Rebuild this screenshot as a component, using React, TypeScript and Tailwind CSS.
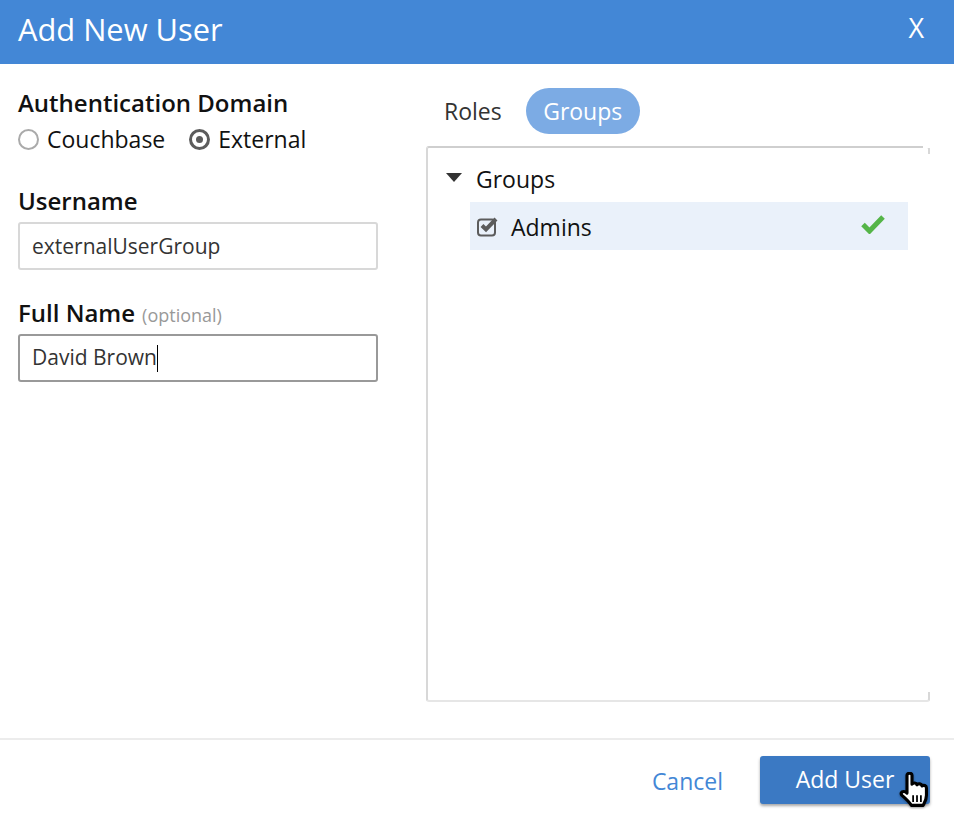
export default function App() {
  const font = { fontFamily: '"Open Sans", sans-serif' };
  return (
    <div style={font} className="w-[954px] h-[816px] bg-white flex flex-col overflow-hidden text-[#111]">
      <header className="h-16 shrink-0 bg-[#4387d6] flex items-center justify-between pl-[18px] pr-[30px] text-white">
        <h1 className="text-[30.8px] font-medium leading-none -mt-[6px]">Add New User</h1>
        <span className="text-[27px] leading-none -mt-[10px]">X</span>
      </header>
      <main className="flex-1 flex pl-[18px] pr-6 min-h-0">
        <section className="w-[360px] shrink-0 pt-[25px]">
          <div className="text-[24px] font-semibold leading-[28px]">Authentication Domain</div>
          <div className="flex items-center mt-[8px] h-7 text-[23px]">
            <span className="w-[21px] h-[21px] rounded-full border-2 border-[#aaa] mr-2 shrink-0" />
            <span>Couchbase</span>
            <span className="w-[21px] h-[21px] rounded-full border-[3px] border-[#5c5c5c] ml-6 mr-2 shrink-0 flex items-center justify-center">
              <span className="w-[7px] h-[7px] rounded-full bg-[#5c5c5c]" />
            </span>
            <span>External</span>
          </div>
          <div className="text-[24px] font-semibold leading-[28px] mt-[34px]">Username</div>
          <div className="mt-[7px] h-12 border-2 border-[#d8d8d8] rounded-[3px] flex items-center px-3 pt-[1px] text-[21px] text-[#333]">externalUserGroup</div>
          <div className="flex items-baseline gap-[7px] mt-[29px] leading-[28px]">
            <span className="text-[24px] font-semibold">Full Name</span>
            <span className="text-[18px] text-[#999]">(optional)</span>
          </div>
          <div className="mt-[5px] h-12 border-2 border-[#999] rounded-[3px] flex items-center px-3 text-[21px] text-[#333]">
            David Brown<span className="inline-block w-px h-[27px] bg-black" />
          </div>
        </section>
        <section className="flex-1 ml-12 flex flex-col pt-6 pb-[36px] min-h-0">
          <div className="flex items-center h-[46px] text-[23px]">
            <span className="px-[18px] text-[#333]">Roles</span>
            <span className="h-[46px] w-[114px] justify-center ml-[6px] rounded-[23px] bg-[#7cabe4] text-white flex items-center">Groups</span>
          </div>
          <div className="relative flex-1 mt-[12px] border-2 border-[#d8d8d8] border-t-[#cfcfcf] border-b-[#e6e6e6] rounded-[3px] pt-[15px] pl-[18px] pr-5">
            <div className="absolute -right-[2px] top-[6px] bottom-[8px] w-[2px] bg-white" />
            <div className="absolute -right-[2px] -top-[2px] w-[7px] h-[2px] bg-white" />
            <div className="flex items-center h-8 text-[23px]">
              <svg width="16" height="9" viewBox="0 0 16 9" className="mr-[14px] -mt-[4px]"><path d="M0 0h16l-8 9z" fill="#333" /></svg>
              <span>Groups</span>
            </div>
            <div className="ml-6 mt-[7px] h-12 bg-[#eaf1fa] flex items-center pl-[6px] pt-[2px] text-[23px]">
              <svg width="23" height="21" viewBox="0 0 23 21" className="mr-[12px] -mt-[2px] shrink-0">
                <rect x="2" y="3.5" width="17" height="16" rx="3" fill="none" stroke="#5c5c5c" strokeWidth="2" />
                <path d="M6 9.5l4 4L20 3" fill="none" stroke="#5c5c5c" strokeWidth="4" />
              </svg>
              <span>Admins</span>
              <svg width="24" height="20" viewBox="0 0 24 20" className="ml-auto mr-[23px] -mt-[6px]">
                <path d="M2 10.5l6.5 6.5L22 3" fill="none" stroke="#55b548" strokeWidth="5" />
              </svg>
            </div>
          </div>
        </section>
      </main>
      <footer className="h-[78px] shrink-0 border-t-2 border-[#ececec] flex items-start justify-end pr-6 pt-[16px] relative">
        <span className="text-[23px] text-[#4387d6] mt-[8px] mr-[37px]">Cancel</span>
        <div className="w-[170px] h-12 pb-[2px] rounded-[3px] bg-[#3b79c3] shadow-[0_2px_3px_rgba(0,0,0,0.35)] text-white text-[23px] flex items-center justify-center">Add User</div>
        <svg width="36" height="40" viewBox="0 0 32 36" className="absolute left-[899px] top-[32px] drop-shadow-[0_1px_1px_rgba(0,0,0,0.35)]">
          <path d="M7 3c0-2.500 4.500-2.500 4.500 0V11c1-1.500 4-1.500 4.500.5c1-1.500 4-1 4.500 1c1.500-1 4-.5 4 2V21c0 4-1.500 6-3 9H11c-2-3-5-6-8.500-9c-1.500-1.500-.5-3.500 1.500-3.500c1 0 2 .5 3 1.500z" fill="#fff" stroke="#000" strokeWidth="2.800" strokeLinejoin="round" />
          <path d="M12.500 21v6M16 21v6M19.500 21v6" stroke="#000" strokeWidth="1.600" />
        </svg>
      </footer>
    </div>
  );
}
